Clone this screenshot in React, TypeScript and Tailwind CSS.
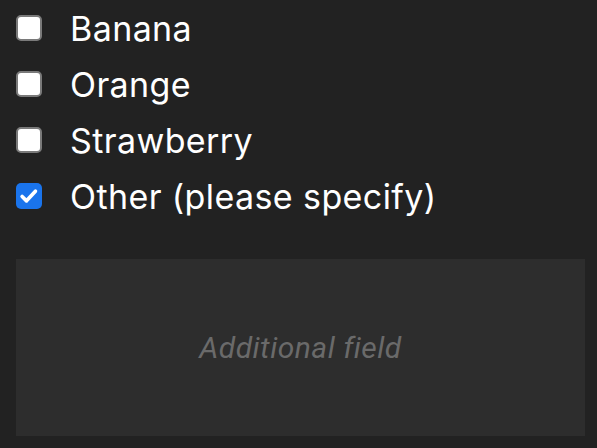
import { useState } from "react";

const fruits = ["Banana", "Orange", "Strawberry", "Other (please specify)"];

function Box({ on }: { on: boolean }) {
  return on ? (
    <span className="flex h-[26px] w-[26px] shrink-0 items-center justify-center rounded-[5px] bg-[#1a74ec]">
      <svg viewBox="0 0 24 24" className="h-[22px] w-[22px]" fill="none">
        <path
          d="M4.5 12.5l4.8 4.8 9.7-10.6"
          stroke="white"
          strokeWidth="4"
          strokeLinecap="round"
          strokeLinejoin="round"
        />
      </svg>
    </span>
  ) : (
    <span className="h-[26px] w-[26px] shrink-0 rounded-[5px] border-2 border-[#7a7a7a] bg-white" />
  );
}

export default function App() {
  const [checked, setChecked] = useState<Record<string, boolean>>({
    "Other (please specify)": true,
  });

  return (
    <div className="min-h-screen w-full bg-[#222222] pl-4 pr-3 font-['Inter',sans-serif] text-white">
      <div className="flex flex-col">
        {fruits.map((f) => (
          <label
            key={f}
            className="flex h-[56px] cursor-pointer items-center gap-[28px]"
            onClick={() => setChecked({ ...checked, [f]: !checked[f] })}
          >
            <Box on={!!checked[f]} />
            <span className="pt-[1px] text-[34px] leading-none tracking-[0.4px]">{f}</span>
          </label>
        ))}
      </div>
      <div className="mt-[35px] flex h-[177px] items-center justify-center bg-[#2d2d2d]">
        <span className="font-['Roboto',sans-serif] text-[30px] italic tracking-[0.5px] text-[#6a6a6a]">
          Additional field
        </span>
      </div>
    </div>
  );
}
